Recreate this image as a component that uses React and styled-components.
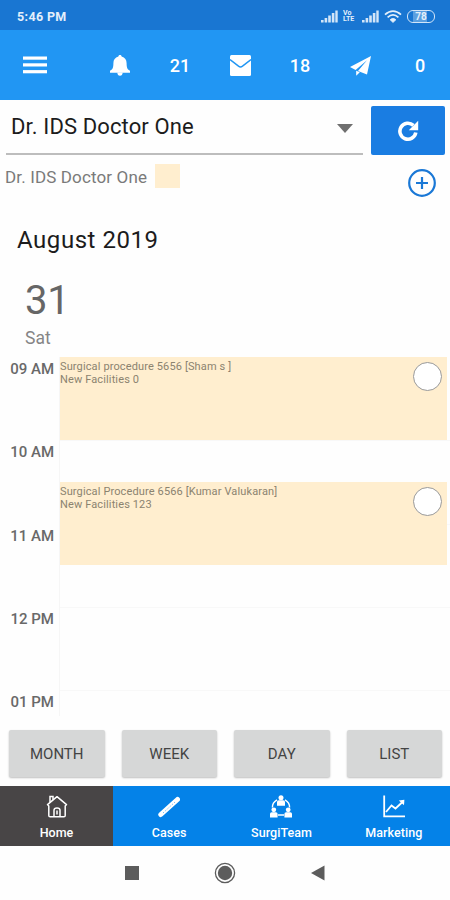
import React from "react";
import styled, { createGlobalStyle } from "styled-components";

const HOURS = ["09 AM", "10 AM", "11 AM", "12 PM", "01 PM"];

const EVENTS = [
  {
    title: "Surgical procedure 5656 [Sham s ]",
    place: "New Facilities 0",
    row: 1,
  },
  {
    title: "Surgical Procedure 6566 [Kumar Valukaran]",
    place: "New Facilities 123",
    row: 4,
  },
];

const VIEWS = ["MONTH", "WEEK", "DAY", "LIST"];

const SignalIcon = () => (
  <svg width="17" height="13" viewBox="0 0 17 13" fill="#d3e5f8">
    <rect x="0" y="10" width="2.6" height="2.5" />
    <rect x="3.6" y="8" width="2.6" height="4.5" />
    <rect x="7.2" y="5.5" width="2.6" height="7" />
    <rect x="10.8" y="3" width="2.6" height="9.5" />
    <rect x="14.3" y="0.5" width="2.4" height="12" />
  </svg>
);

const WifiIcon = () => (
  <svg width="18" height="13" viewBox="0 0 18 13" fill="none" stroke="#e3effb">
    <path d="M1 4.6Q9-2.4 17 4.6" strokeWidth="1.8" />
    <path d="M3.6 7.3Q9 2.4 14.4 7.3" strokeWidth="1.7" />
    <path d="M6 9.7Q9 7 12 9.7L9 12.6Z" fill="#e3effb" strokeWidth="0.6" />
  </svg>
);

const MenuIcon = () => (
  <svg width="24" height="18" viewBox="0 0 24 18" fill="#fff">
    <rect x="0" y="0.5" width="24" height="3.2" />
    <rect x="0" y="7.3" width="24" height="3.2" />
    <rect x="0" y="14.1" width="24" height="3.2" />
  </svg>
);

const BellIcon = () => (
  <svg width="20" height="21" viewBox="0 0 20 21" fill="#fff">
    <path d="M10 0c1 0 1.6.7 1.6 1.6C15 2.4 16.6 5 16.6 8.3c0 4.8 1.1 6.6 3.4 7.5v1.9H0v-1.900c2.300-.9 3.400-2.700 3.400-7.500C3.400 5 5 2.400 8.400 1.600 8.400.7 9 0 10 0z" />
    <path d="M7.300 17.500h5.400c0 2-1.200 3.300-2.700 3.300s-2.700-1.300-2.700-3.300z" />
  </svg>
);

const MailIcon = () => (
  <svg width="21" height="21" viewBox="0 0 21 21">
    <rect width="21" height="21" rx="1.5" fill="#fff" />
    <path d="M0 4.6L8.5 11.2Q10.5 12.6 12.5 11.2L21 4.6" fill="none" stroke="#2196f3" strokeWidth="1.5" />
  </svg>
);

const PlaneIcon = () => (
  <svg width="21" height="20" viewBox="0 0 21 20" fill="#fff">
    <path d="M21 0L0 11l5.600 3L17 4.200 8 14.900l9 3.600z" />
    <path d="M6.200 14.800v5l3.600-3.600z" />
  </svg>
);

const RefreshIcon = () => (
  <svg width="22" height="22" viewBox="0 0 22 22">
    <path d="M16.4 5.400A8 8 0 1 0 18.800 12.500" fill="none" stroke="#fff" strokeWidth="3.600" />
    <path d="M21.200 0.800v9.400h-9.400z" fill="#fff" />
  </svg>
);

const PlusIcon = () => (
  <svg width="28" height="28" viewBox="0 0 28 28" fill="none" stroke="#1a78d6" strokeWidth="2.2">
    <circle cx="14" cy="14" r="12.8" />
    <path d="M14 8v12M8 14h12" />
  </svg>
);

const HomeIcon = () => (
  <svg width="22" height="23" viewBox="0 0 22 23" fill="none" stroke="#fff" strokeWidth="1.5">
    <path d="M1.5 9.6L11 1.7l9.5 7.9-1.3 1.4v9.5q0 1.3-1.3 1.3H4.1q-1.3 0-1.3-1.3V11z" strokeLinejoin="round" />
    <path d="M4 7.4V1.5h3v3.2M8 21.5v-6.300q0-2.200 3-2.200t3 2.200v6.300" />
    <path d="M11 15.500v4" />
  </svg>
);

const ScalpelIcon = () => (
  <svg width="22" height="22" viewBox="0 0 22 22" fill="none">
    <path d="M2.800 19L19.500 4" stroke="#fff" strokeWidth="5" strokeLinecap="round" />
    <path d="M5 17.500L17 6.500" stroke="#7dbcf3" strokeWidth="1" strokeDasharray="1.500 1.500" />
  </svg>
);

const TeamIcon = () => (
  <svg width="22" height="23" viewBox="0 0 22 23" fill="#fff">
    <path d="M7 4.8Q2.200 7.600 2.400 12.500M15 4.800q4.800 2.800 4.600 7.700M8 20h6" fill="none" stroke="#fff" strokeWidth="1.4" />
    <circle cx="11" cy="2.800" r="2.500" />
    <path d="M7 10.800V7q0-1.800 1.800-1.800h4.400q1.800 0 1.800 1.800v3.800z" />
    <circle cx="3.800" cy="14.800" r="2.400" />
    <path d="M0 22.500v-3.600q0-1.700 1.700-1.700h4.200q1.700 0 1.700 1.700v3.600z" />
    <circle cx="18.200" cy="14.800" r="2.400" />
    <path d="M14.400 22.500v-3.600q0-1.700 1.700-1.700h4.200q1.700 0 1.700 1.700v3.600z" />
  </svg>
);

const ChartIcon = () => (
  <svg width="22" height="23" viewBox="0 0 22 23" fill="none" stroke="#fff" strokeWidth="1.8">
    <path d="M1.2 0.5v20.800H22" />
    <path d="M3 17l5.500-6.500 4 3L19.500 7" />
    <path d="M15.800 5.400l5.600-.6-.4 5.400z" fill="#fff" stroke="none" />
  </svg>
);

const TABS = [
  { label: "Home", icon: <HomeIcon />, active: true },
  { label: "Cases", icon: <ScalpelIcon /> },
  { label: "SurgiTeam", icon: <TeamIcon /> },
  { label: "Marketing", icon: <ChartIcon /> },
];

const App = () => {
  return (
    <Phone>
      <GlobalStyle />
      <StatusBar>
        <Clock>5:46 PM</Clock>
        <StatusIcons>
          <SignalIcon />
          <Volte>
            <span>Vo</span>
            <span>LTE</span>
          </Volte>
          <SignalIcon />
          <WifiIcon />
          <Battery>78</Battery>
        </StatusIcons>
      </StatusBar>

      <Toolbar>
        <MenuButton>
          <MenuIcon />
        </MenuButton>
        <ToolItem><BellIcon /></ToolItem>
        <ToolItem>21</ToolItem>
        <ToolItem><MailIcon /></ToolItem>
        <ToolItem>18</ToolItem>
        <ToolItem><PlaneIcon /></ToolItem>
        <ToolItem>0</ToolItem>
      </Toolbar>

      <FilterRow>
        <Select>
          <SelectText>Dr. IDS Doctor One</SelectText>
          <Caret />
        </Select>
        <RefreshButton>
          <RefreshIcon />
        </RefreshButton>
      </FilterRow>

      <LegendRow>
        <LegendText>Dr. IDS Doctor One</LegendText>
        <Swatch />
        <AddButton>
          <PlusIcon />
        </AddButton>
      </LegendRow>

      <MonthTitle>August 2019</MonthTitle>
      <DayNumber>31</DayNumber>
      <DayName>Sat</DayName>

      <Schedule>
        {HOURS.map((h, i) => (
          <React.Fragment key={h}>
            <HourLabel $row={i * 2 + 1}>{h}</HourLabel>
            <HourSlot $row={i * 2 + 1} $line={i > 0} />
          </React.Fragment>
        ))}
        {EVENTS.map((e) => (
          <Event key={e.title} $row={e.row}>
            <EventText>
              <div>{e.title}</div>
              <div>{e.place}</div>
            </EventText>
            <EventCheck />
          </Event>
        ))}
      </Schedule>

      <ViewRow>
        {VIEWS.map((v) => (
          <ViewButton key={v}>{v}</ViewButton>
        ))}
      </ViewRow>

      <TabBar>
        {TABS.map((t) => (
          <Tab key={t.label} $active={t.active}>
            {t.icon}
            <TabLabel>{t.label}</TabLabel>
          </Tab>
        ))}
      </TabBar>

      <SystemNav>
        <svg width="14" height="14"><rect width="14" height="14" fill="#5c5c5c" /></svg>
        <svg width="22" height="22" viewBox="0 0 22 22">
          <circle cx="11" cy="11" r="9.6" fill="none" stroke="#5c5c5c" strokeWidth="1.3" />
          <circle cx="11" cy="11" r="7.2" fill="#5c5c5c" />
        </svg>
        <svg width="14" height="16"><path d="M0 8L13.500.5v15z" fill="#5c5c5c" /></svg>
      </SystemNav>
    </Phone>
  );
};

const GlobalStyle = createGlobalStyle`
  body {
    margin: 0;
    background: #fefefe;
  }
  * {
    box-sizing: border-box;
  }
  svg {
    display: block;
    flex: none;
  }
`;

const Phone = styled.div`
  width: 450px;
  height: 900px;
  display: flex;
  flex-direction: column;
  overflow: hidden;
  background: #fefefe;
  font-family: Roboto, "Liberation Sans", sans-serif;
  white-space: nowrap;
`;

const StatusBar = styled.div`
  height: 30px;
  display: flex;
  align-items: center;
  justify-content: space-between;
  padding: 2px 15px 0 17px;
  background: #1976d2;
  color: #e3effb;
`;

const Clock = styled.div`
  font-size: 12.5px;
  font-weight: 700;
  letter-spacing: 0.35px;
`;

const StatusIcons = styled.div`
  display: flex;
  align-items: center;
  gap: 5px;
`;

const Volte = styled.div`
  width: 14px;
  display: flex;
  flex-direction: column;
  font-size: 7px;
  line-height: 6.5px;
  font-weight: 700;
`;

const Battery = styled.div`
  width: 28px;
  height: 13px;
  border: 1.5px solid #d3e5f8;
  border-radius: 6px;
  background: linear-gradient(90deg, #1976d2 20%, #5b9fe0 20%, #5b9fe0 74%, #1976d2 74%);
  font-size: 10px;
  line-height: 11px;
  font-weight: 700;
  text-align: center;
`;

const Toolbar = styled.div`
  height: 70px;
  display: flex;
  align-items: center;
  background: #2196f3;
  color: #fff;
`;

const MenuButton = styled.div`
  width: 90px;
  padding-left: 23px;
`;

const ToolItem = styled.div`
  width: 60px;
  display: flex;
  justify-content: center;
  padding-top: 1px;
  font-size: 18px;
  font-weight: 500;
`;

const FilterRow = styled.div`
  height: 56px;
  display: flex;
  justify-content: space-between;
  padding: 6px 5px 0 6px;
`;

const Select = styled.div`
  width: 357px;
  height: 49px;
  display: flex;
  align-items: center;
  justify-content: space-between;
  padding: 0 10px 6px 5px;
  border-bottom: 2px solid #bdbdbd;
`;

const SelectText = styled.div`
  font-size: 22px;
  letter-spacing: 0.12px;
  color: #1c1c1c;
`;

const Caret = styled.div`
  margin-top: 4px;
  border: 8.5px solid transparent;
  border-top: 9px solid #6f6f6f;
  border-bottom: 0;
`;

const RefreshButton = styled.div`
  width: 74px;
  height: 49px;
  display: flex;
  align-items: center;
  justify-content: center;
  border-radius: 2px;
  background: #1a7de2;
`;

const LegendRow = styled.div`
  height: 54px;
  display: flex;
  align-items: flex-start;
  padding: 8px 14px 0 5px;
`;

const LegendText = styled.div`
  width: 150px;
  font-size: 17px;
  line-height: 26px;
  letter-spacing: 0.14px;
  color: #7a7a7a;
`;

const Swatch = styled.div`
  width: 25px;
  height: 24px;
  background: #ffeecf;
`;

const AddButton = styled.div`
  margin: 5px 0 0 auto;
`;

const MonthTitle = styled.div`
  padding: 15px 0 0 17px;
  font-size: 24px;
  line-height: 30px;
  letter-spacing: 0.55px;
  color: #1c1c1c;
`;

const DayNumber = styled.div`
  padding: 22px 0 0 25px;
  font-size: 40px;
  line-height: 48px;
  letter-spacing: -0.2px;
  color: #666;
`;

const DayName = styled.div`
  height: 32px;
  padding-left: 25px;
  font-size: 17.5px;
  line-height: 27px;
  color: #858585;
`;

const Schedule = styled.div`
  height: 359px;
  display: grid;
  grid-template-columns: 60px 1fr;
  grid-template-rows: repeat(10, 41.65px);
  overflow: hidden;
`;

const HourLabel = styled.div`
  grid-column: 1;
  grid-row: ${(props) => props.$row} / span 2;
  padding: 3px 5px 0 0;
  border-right: 1px solid #f6f6f6;
  text-align: right;
  font-size: 15px;
  line-height: 18px;
  font-weight: 500;
  color: #696969;
`;

const HourSlot = styled.div`
  grid-column: 2;
  grid-row: ${(props) => props.$row} / span 2;
  ${(props) => (props.$line ? "border-top: 1px solid #f8f8f8;" : "")}
`;

const Event = styled.div`
  grid-column: 2;
  grid-row: ${(props) => props.$row} / span 2;
  display: flex;
  justify-content: space-between;
  margin-right: 3px;
  padding: 2px 5px 0 0;
  background: #ffeecf;
`;

const EventText = styled.div`
  padding-top: 1px;
  font-size: 11px;
  line-height: 13.3px;
  letter-spacing: 0.13px;
  color: #8b836f;
`;

const EventCheck = styled.div`
  width: 29px;
  height: 29px;
  margin-top: 3px;
  border: 1px solid #999;
  border-radius: 50%;
  background: #fff;
`;

const ViewRow = styled.div`
  height: 70px;
  display: grid;
  grid-template-columns: repeat(4, 1fr);
  gap: 17px;
  padding: 14px 8px 0 9px;
`;

const ViewButton = styled.div`
  height: 47px;
  display: flex;
  align-items: center;
  justify-content: center;
  border-radius: 2px;
  background: #d6d7d7;
  box-shadow: 0 1px 2px rgba(0, 0, 0, 0.25);
  font-size: 15px;
  color: #444;
`;

const TabBar = styled.div`
  height: 60px;
  display: grid;
  grid-template-columns: 113px repeat(3, 1fr);
`;

const Tab = styled.div`
  display: flex;
  flex-direction: column;
  align-items: center;
  padding-top: 9px;
  background: ${(props) => (props.$active ? "#484546" : "#0482e8")};
  color: #fff;

  svg {
    height: 23px;
  }
`;

const TabLabel = styled.div`
  margin-top: 6px;
  font-size: 12.5px;
  line-height: 17px;
  font-weight: 500;
  letter-spacing: 0.05px;
`;

const SystemNav = styled.div`
  flex: 1;
  display: flex;
  align-items: center;
  gap: 75px;
  padding: 0 0 0 125px;
`;

export default App;
